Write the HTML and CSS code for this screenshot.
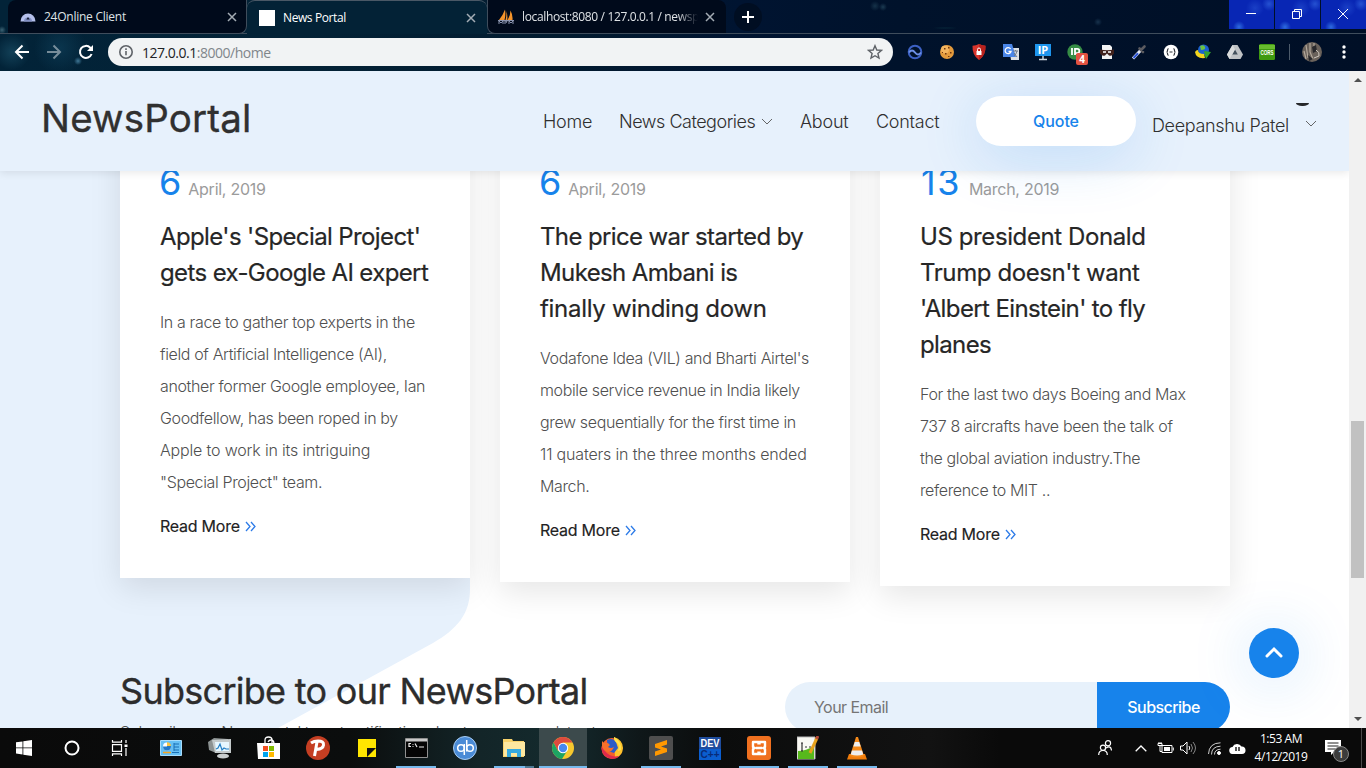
FILE: index.html
```html
<!DOCTYPE html>
<html lang="en">
<head>
<meta charset="utf-8">
<title>News Portal</title>
<link rel="stylesheet" href="styles.css">
</head>
<body>
<div class="browser">
  <div class="tabstrip">
    <div class="tab first">
      <svg width="16" height="16" viewBox="0 0 16 16"><path d="M.5 12.500a7.500 8 0 0 1 15 0z" fill="#b4c0ec"/><path d="M4 12.500a4 4 0 0 1 8 0z" fill="#8290c4"/><path d="M8 8l1.700 2.500H6.300z" fill="#10182f"/></svg>
      <span class="tabname n1">24Online Client</span>
      <svg class="x" width="10" height="10" viewBox="0 0 10 10"><path d="M1 1l8 8M9 1L1 9"/></svg>
    </div>
    <div class="tab active">
      <i class="blank"></i>
      <span class="tabname n2">News Portal</span>
      <svg class="x" width="10" height="10" viewBox="0 0 10 10"><path d="M1 1l8 8M9 1L1 9"/></svg>
    </div>
    <div class="tab third">
      <svg width="16" height="16" viewBox="0 0 16 16"><path d="M7 0.500Q8 6 6.500 11H1Q5 6 7 0.500zM8 2q2 4 1.200 9H7.500Q9 6 8 2zM12.500 1.500Q15 6 14.500 11H9.500Q12.500 6 12.500 1.500z" fill="#f5942b"/><path d="M0 11.500h16M1 15v-3l2 2 2-2v3M7 15v-3h2l-1 2M11 15v-3l2 2 2-2v3" stroke="#8993ae" fill="none"/></svg>
      <span class="tabname n3">localhost:8080 / 127.0.0.1 / newsp</span>
      <svg class="x" width="10" height="10" viewBox="0 0 10 10"><path d="M1 1l8 8M9 1L1 9"/></svg>
    </div>
    <div class="newtab"><svg width="12" height="12" viewBox="0 0 12 12"><path d="M6 0v12M0 6h12" stroke="#fff" stroke-width="2"/></svg></div>
    <div class="winbtns">
      <div><svg width="10" height="10"><path d="M0 4.500h10"/></svg></div>
      <div><svg width="10" height="10"><path d="M.5 2.500h7v7h-7zM2.500 2.500v-2h7v7h-2"/></svg></div>
      <div><svg width="10" height="10"><path d="M0 0l10 10M10 0L0 10"/></svg></div>
    </div>
  </div>
  <div class="toolbar">
    <svg class="nav" width="16" height="16" viewBox="0 0 16 16"><path d="M15 8H2M8.500 1.500L2 8l6.500 6.500" /></svg>
    <svg class="nav dim" width="16" height="16" viewBox="0 0 16 16"><path d="M1 8h13M7.500 1.500L14 8l-6.500 6.500"/></svg>
    <svg class="nav" width="16" height="16" viewBox="0 0 16 16"><path d="M13.600 10A6 6 0 1 1 12.300 3.700L14 5.500"/><path d="M15 1v6H9z" fill="#fff" stroke="none"/></svg>
    <div class="omnibox">
      <svg width="16" height="16" viewBox="0 0 16 16" fill="none" stroke="#5f6368" stroke-width="1.600"><circle cx="8" cy="8" r="6.200"/><path d="M8 7v4.300M8 4.300v1.600"/></svg>
      <span class="url"><b>127.0.0.1</b>:8000/home</span>
      <svg class="star" width="16" height="16" viewBox="0 0 16 16"><path d="M8 1.700l1.800 4.300 4.700.4-3.600 3.100 1.100 4.600L8 11.700l-4 2.400 1.100-4.600L1.500 6.400l4.700-.4z" fill="none" stroke="#5f6368" stroke-width="1.400"/></svg>
    </div>
    <div class="exts">
      <svg viewBox="0 0 16 16"><circle cx="8" cy="8" r="6.300" fill="none" stroke="#3c61c4" stroke-width="2"/><path d="M2 8.500q3-4 6 0t6 0" fill="none" stroke="#6d90e6" stroke-width="2"/></svg>
      <svg viewBox="0 0 16 16"><circle cx="8" cy="8" r="7" fill="#e39a3c"/><circle cx="6" cy="5.500" r="4" fill="#f3b45e"/><path d="M5 4h1.500v1.500H5zM9 3h1.500v1.500H9zM11 8h1.500v1.500H11zM6 9h1.500v1.500H6zM3 8h1v1H3zM9 12h1.500v1H9z" fill="#71370f"/></svg>
      <svg viewBox="0 0 16 16"><path d="M8 0q3 1.600 6.500 1.700Q15 11 8 16 1 11 1.500 1.700 5 1.600 8 0z" fill="#d8342c"/><path d="M8 0q3 1.600 6.500 1.700Q15 11 8 16z" fill="#b9221d"/><path d="M5.500 7h5v4h-5z" fill="#fff"/><path d="M6.500 7V5.500a1.500 1.500 0 0 1 3 0V7" fill="none" stroke="#fff"/></svg>
      <svg viewBox="0 0 16 16"><path d="M6 4h10v12H8z" fill="#dbdfe4"/><path d="M0 0h9l4 13H0z" fill="#4a86e8"/><path d="M7.600 5A3 3 0 1 0 8 7.500H5.500" fill="none" stroke="#fff" stroke-width="1.300"/><path d="M10 7h5M12.500 6v1M14 7q-1 4-3 5M11 9l3 4" fill="none" stroke="#6f7b8a"/></svg>
      <svg viewBox="0 0 16 16"><path d="M0 0h16v12H0z" fill="#1e95ee"/><path d="M4 15.500h8M8 12v3" stroke="#c9d4dc" stroke-width="1.500"/><text x="8" y="10" class="iptext">IP</text></svg>
      <div class="pub"><svg viewBox="0 0 16 16"><circle cx="8" cy="8" r="7.700" fill="#358c45"/><path d="M5 4v7M8 11V4.800h2.200a2 2 0 0 1 0 4.300H8" fill="none" stroke="#fff" stroke-width="1.800"/></svg><em>4</em></div>
      <svg viewBox="0 0 16 16"><path d="M3 1h8l2 2v12H3z" fill="#f3f3f3"/><path d="M1 5.500q7 1.500 14 0v4q-2 3-5 2l-2-2-2 2q-3 1-5-2z" fill="#40211c"/><path d="M4 8h3M9 8h3" stroke="#fff" stroke-width="1.300"/></svg>
      <svg viewBox="0 0 16 16"><path d="M2 14.500L10 6" stroke="#e4e9f5" stroke-width="3"/><path d="M2.500 14L7 9.200" stroke="#2c55d6" stroke-width="2"/><path d="M8.500 4.500l3.500 3.500M10 6l3.500-3.500" stroke="#5b5b60" stroke-width="2.600" stroke-linecap="round"/></svg>
      <svg viewBox="0 0 16 16"><circle cx="8" cy="8" r="7.300" fill="#fff"/><path d="M5.500 4.500Q4.500 5 4.500 6.500T3.500 8q1 0 1 1.500t1 2M10.500 4.500q1 .5 1 2t1 1.500q-1 0-1 1.500t-1 2M6.500 8h3" fill="none" stroke="#30343a" stroke-width="1.200"/></svg>
      <svg viewBox="0 0 16 16"><circle cx="8.500" cy="6" r="5.500" fill="#1b62cf"/><path d="M5 2q4-2 5 1T6 6z" fill="#6cc341"/><path d="M0 8q1-2 3-2 0 4 6 4l1 4q-9 1-10-6z" fill="#f2d51d"/><path d="M9 7l7 1-5 7-1-3z" fill="#33a52e"/></svg>
      <svg viewBox="0 0 16 16"><path d="M5.500 1h5L16 10.500 13.500 15h-11L0 10.500z" fill="#bfc2c5"/><path d="M8 5.500l2.800 5H5.200z" fill="#43505c"/><path d="M5.500 1L8 5.500 2.500 15 0 10.500z" fill="#d9dbdc"/></svg>
      <svg viewBox="0 0 16 16"><rect width="16" height="16" rx="1.500" fill="#3f9a10"/><path d="M0 1h16v4H0z" fill="#67bb2e"/><text x="8" y="10.600" class="cors" textLength="13" lengthAdjust="spacingAndGlyphs">CORS</text></svg>
    </div>
    <i class="vbar"></i>
    <svg class="avatar" viewBox="0 0 20 20"><circle cx="10" cy="10" r="10" fill="#6a625b"/><path d="M4 3l2 13M8 1v9l3 7M2 9l2 8M12 1v3" stroke="#b3a89b" stroke-width="1.200" fill="none"/><path d="M10 5l4-2 1 6-4 2zM6 13l5 4-4 2z" fill="#29292c"/><path d="M14 8q4 2 3 6l-5 2" stroke="#cfc8bf" fill="none"/></svg>
    <svg class="more" width="4" height="14"><circle cx="2" cy="2" r="1.700"/><circle cx="2" cy="7" r="1.700"/><circle cx="2" cy="12" r="1.700"/></svg>
  </div>
</div>

<div class="view">
  <div class="page">
    <svg class="shape" width="480" height="657" viewBox="0 0 480 657"><path d="M0 0H470V518C470 543 457 558 433 572L278 657H0Z" fill="#e7f1fc"/></svg>
    <header class="header">
      <span class="brand">NewsPortal</span>
      <nav class="menu">
        <a class="m1">Home</a>
        <a class="m2">News Categories</a>
        <svg class="chev" width="12" height="7" viewBox="0 0 12 7"><path d="M1 1l5 5 5-5"/></svg>
        <a class="m3">About</a>
        <a class="m4">Contact</a>
      </nav>
      <a class="quote">Quote</a>
      <div class="user"><a>Deepanshu Patel</a><svg class="chev" width="12" height="7" viewBox="0 0 12 7"><path d="M1 1l5 5 5-5"/></svg>
        <i class="pic"></i>
      </div>
    </header>
    <main class="cards">
      <article class="card">
        <div class="date"><b>6</b><span>April, 2019</span></div>
        <h3>Apple's 'Special Project'<br>gets ex-Google AI expert</h3>
        <p>In a race to gather top experts in the<br>field of Artificial Intelligence (AI),<br>another former Google employee, Ian<br>Goodfellow, has been roped in by<br><span class="loose">Apple to work in its intriguing</span><br>"Special Project" team.</p>
        <a class="more-link"><span>Read More</span><svg width="11" height="11" viewBox="0 0 11 11"><path d="M1 1l4 4.500L1 10M6 1l4 4.500L6 10"/></svg></a>
      </article>
      <article class="card">
        <div class="date"><b>6</b><span>April, 2019</span></div>
        <h3>The price war started by<br>Mukesh Ambani is<br><span class="loose">finally winding down</span></h3>
        <p>Vodafone Idea (VIL) and Bharti Airtel's<br>mobile service revenue in India likely<br>grew sequentially for the first time in<br><span class="loose">11 quaters in the three months ended</span><br>March.</p>
        <a class="more-link"><span>Read More</span><svg width="11" height="11" viewBox="0 0 11 11"><path d="M1 1l4 4.500L1 10M6 1l4 4.500L6 10"/></svg></a>
      </article>
      <article class="card">
        <div class="date"><b class="wide-day">13</b><span>March, 2019</span></div>
        <h3><span class="loose">US president Donald</span><br><span class="loose">Trump doesn't want</span><br>'Albert Einstein' to fly<br>planes</h3>
        <p>For the last two days Boeing and Max<br>737 8 aircrafts have been the talk of<br>the global aviation industry.The<br>reference to MIT ..</p>
        <a class="more-link"><span>Read More</span><svg width="11" height="11" viewBox="0 0 11 11"><path d="M1 1l4 4.500L1 10M6 1l4 4.500L6 10"/></svg></a>
      </article>
    </main>
    <section class="subscribe">
      <div class="pitch">
        <h2>Subscribe to our NewsPortal</h2>
        <p>Subscribe our Newsportal to get notification about our new updates to</p>
      </div>
      <div class="form"><span class="field">Your Email</span><span class="btn">Subscribe</span></div>
    </section>
    <div class="totop"><svg width="18" height="12" viewBox="0 0 18 12"><path d="M2 10l7-7 7 7" fill="none" stroke="#fff" stroke-width="3" stroke-linecap="round"/></svg></div>
  </div>
  <div class="scroll"><i class="up"></i><i class="thumb"></i><i class="down"></i></div>
</div>

<div class="taskbar">
  <div class="cell"><svg width="16" height="16" viewBox="0 0 16 16"><path d="M0 2.300l6.500-.9v6.100H0zM7.300 1.200L16 0v7.500H7.300zM0 8.300h6.500v6.200L0 13.600zM7.300 8.300H16V16l-8.700-1.300z" fill="#fff"/></svg></div>
  <div class="cell"><svg width="16" height="16"><circle cx="8" cy="8" r="6.500" fill="none" stroke="#fff" stroke-width="2"/></svg></div>
  <div class="cell wide"><svg width="18" height="16" viewBox="0 0 18 16" fill="none" stroke="#fff" stroke-width="1.200"><path d="M1.500 4.600h9v6.800h-9zM1.500 0v2.200h9V0M1.500 16v-2.200h9V16M15 0v3M15 8v8"/><path d="M13.500 4.500h3v2.500h-3z" fill="#fff" stroke="none"/></svg></div>
  <div class="cell"><svg width="22" height="16" viewBox="0 0 22 16"><path d="M.5.500h21v15H.5z" fill="#65bff4" stroke="#a8dcfb"/><circle cx="7" cy="6.500" r="4" fill="#fff"/><path d="M7 6.500V2.500a4 4 0 1 1-4 4z" fill="#2379c9"/><path d="M7 6V2.200A4 4 0 0 1 11 6z" fill="#f6c545"/><path d="M14 3v8M14 4h5M14 7h5M14 10h5M12 12.500h7" stroke="#1a6fb4"/><path d="M3 12.500h8" stroke="#f6a623" stroke-width="1.500"/></svg></div>
  <div class="cell"><svg width="24" height="22" viewBox="0 0 24 22"><path d="M0 5l6-4 14 1v12l-12 2-7-3z" fill="#8c9292"/><path d="M4 3l19-1v14H7z" fill="#c4cacb"/><path d="M7 5h14v9H8z" fill="#e7f7ff"/><path d="M8 12l2-1 2-4 2 6 2-2 2 1h3" fill="none" stroke="#237ec4" stroke-width="1.200"/><ellipse cx="15" cy="19" rx="6" ry="2.500" fill="#c9cdce"/></svg></div>
  <div class="cell"><svg width="24" height="24" viewBox="0 0 24 24"><path d="M0 7h23v16H1z" fill="#fff"/><path d="M8 8V4q0-3 3.500-3T15 4v4M11 6q1-2 3-2 3 0 3 4" fill="none" stroke="#fff" stroke-width="1.300"/><path d="M6 10h5v5H6z" fill="#f25022"/><path d="M12 10h5v5h-5z" fill="#7fba00"/><path d="M6 16h5v5H6z" fill="#00a4ef"/><path d="M12 16h5v5h-5z" fill="#ffb900"/></svg></div>
  <div class="cell"><svg width="24" height="24" viewBox="0 0 24 24"><circle cx="12" cy="12" r="12" fill="#c43e22"/><path d="M8.500 20L11 6M5 7Q8 5 12 5q6 0 5.500 4t-7 4.500" fill="none" stroke="#fff" stroke-width="3"/></svg></div>
  <div class="cell"><svg width="18" height="18" viewBox="0 0 18 18"><path d="M0 0h18v18H0z" fill="#ffe600"/><path d="M9 18V9h9z" fill="#111"/></svg></div>
  <div class="cell run"><svg width="23" height="20" viewBox="0 0 23 20"><path d="M.5.500h22v19H.5z" fill="#050505" stroke="#909090"/><path d="M1 1h21v2.500H1z" fill="#c9c9c9"/><path d="M6 5.500H4v3h2M8 6v.8M8 8v.8M10 5.500l2 3.500M14 9h5" stroke="#eee" fill="none" stroke-width="1.200"/></svg></div>
  <div class="cell"><svg width="24" height="24" viewBox="0 0 24 24"><circle cx="12" cy="12" r="11.500" fill="#4a8bd6" stroke="#a9cdf2"/><circle cx="8" cy="12" r="3.300" fill="none" stroke="#fff" stroke-width="1.500"/><path d="M11.300 8v11M13.700 4v11.500" stroke="#fff" stroke-width="1.500"/><circle cx="17" cy="12" r="3.300" fill="none" stroke="#fff" stroke-width="1.500"/></svg></div>
  <div class="cell run folder"><svg width="22" height="20" viewBox="0 0 22 20"><path d="M0 1h9l1 2h11v16H0z" fill="#f8d26b"/><path d="M1 4h21v14H1z" fill="#fde7a0"/><path d="M4 19v-8h14v8h-4v-4H8v4z" fill="#36a9df"/></svg></div>
  <div class="cell current"><svg width="22" height="22" viewBox="0 0 22 22"><circle cx="11" cy="11" r="11" fill="#f7c82e"/><path d="M1.500 5.500A11 11 0 0 1 20.500 5.500H11L6 14z" fill="#dd4b3e"/><path d="M1.500 5.500A11 11 0 0 0 10 22l5-8H6z" fill="#1da463"/><circle cx="11" cy="11" r="5.200" fill="#fff"/><circle cx="11" cy="11" r="4.200" fill="#4688f1"/></svg></div>
  <div class="cell"><svg width="22" height="22" viewBox="0 0 22 22"><circle cx="11" cy="11.500" r="10.500" fill="#f5612a"/><path d="M13 0q9 3 9 11a11 11 0 0 1-8 10z" fill="#fdc32c"/><path d="M.5 9q-.5 11 10.500 13 5 0 7-3-9 2-14-5z" fill="#e02a4c"/><path d="M6 3q6-3 9 2l2 6-4 5-6-2z" fill="#2a5cc8"/><path d="M1 4l2 2q4-1 6 2l-2 2q3 2 6 0-2 5-6 5-5-1-6-6z" fill="#f7702b"/><path d="M13 0q0 4 3 6t1 8l3-1Q21 4 13 0z" fill="#ffe14d"/></svg></div>
  <div class="cell run"><svg width="24" height="24" viewBox="0 0 24 24"><rect width="24" height="24" rx="2" fill="#4e4e4e"/><path d="M6 8l12-4v4.500l-6 2 6 2V16L6 20v-4.500l6-2-6-2z" fill="#ff9800"/></svg></div>
  <div class="cell"><svg width="22" height="23" viewBox="0 0 22 23"><path d="M0 0h22v12H0z" fill="#1f4c9c"/><path d="M0 12h22v11H0z" fill="#0b5ed0"/><text x="11" y="10" class="dev" textLength="19" lengthAdjust="spacingAndGlyphs">DEV</text><text x="11" y="21" class="cpp" textLength="19" lengthAdjust="spacingAndGlyphs">C++</text></svg></div>
  <div class="cell run"><svg width="24" height="24" viewBox="0 0 24 24"><rect width="24" height="24" rx="3" fill="#f0701f"/><path d="M11.500 8.500V6H6v5l2 1-2 1v5h5.500v-2.500M12.500 8.500V6H18v5l-2 1 2 1v5h-5.500v-2.500M9 12h6" fill="none" stroke="#fff" stroke-width="2.400" stroke-linejoin="round"/></svg></div>
  <div class="cell run"><svg width="22" height="24" viewBox="0 0 22 24"><path d="M0 1h18v22H0z" fill="#f8f8f3" stroke="#b9b9b9"/><path d="M1 15q8 0 16-5v13H1z" fill="#57b81c"/><path d="M4 7h2M4 15h2M5 7v8M8 11h2M12 11h2" stroke="#333" stroke-width="1.200"/><path d="M20 2l-7 15" stroke="#e7a11b" stroke-width="3"/><path d="M21 0l-1.500 3" stroke="#b64b38" stroke-width="3"/></svg></div>
  <div class="cell run"><svg width="20" height="23" viewBox="0 0 20 23"><path d="M2 17h16l2 5.500H0z" fill="#f07c0a"/><path d="M9 0h2l6 19q-7 3-14 0z" fill="#f58a1a"/><path d="M7.800 5h4.400l1.500 4.500H6.300zM5 13.500h10l1.300 4q-6 2-12.600 0z" fill="#eee"/></svg></div>
  <div class="tray">
    <svg class="people" width="14" height="16" viewBox="0 0 14 16" fill="none" stroke="#fff" stroke-width="1.200"><circle cx="10" cy="3.200" r="2.600"/><path d="M8 8q5-3 5.500 2.500"/><circle cx="5" cy="7.700" r="2.600"/><path d="M.7 15q0-4.500 4.300-4.500T9.300 15"/></svg>
    <svg class="caret" width="12" height="7" viewBox="0 0 12 7"><path d="M.7 6.300L6 1l5.300 5.300" fill="none" stroke="#fff" stroke-width="1.300"/></svg>
    <svg class="batt" width="17" height="13" viewBox="0 0 17 13"><path d="M5 3.500h10v7H5zM1 1.500v2h4v-2zM3 3.500v6h2M2 0v1.500M4 0v1.500M16.300 5.500v3" fill="none" stroke="#fff"/><path d="M7 5h6v4H7z" fill="#fff"/></svg>
    <svg class="vol" width="17" height="14" viewBox="0 0 17 14" fill="none" stroke="#fff"><path d="M.5 5h2.500l4-4v12l-4-4H.5z"/><path d="M9 5q1.500 2 0 4"/><path d="M11 3q3 4 0 8M13 1q5 6 0 12" opacity=".5"/></svg>
    <svg class="wifi" width="13" height="13" viewBox="0 0 13 13" fill="none" stroke="#fff"><path d="M.5 12Q1 1 12.500.800M3.500 12.500q0-8 9-8.300M6.500 12.500q0-5 6-5.300" opacity=".8"/><circle cx="11" cy="11" r="1.500" fill="#fff"/></svg>
    <svg class="cloud" width="17" height="11" viewBox="0 0 17 11"><path d="M4 11a3.500 3.500 0 0 1-.5-7A5 5 0 0 1 12.500 3.500 3.700 3.700 0 0 1 13 11z" fill="#fff"/><path d="M7 4v4M10 4v4" stroke="#111" stroke-width="1.400"/></svg>
    <div class="clock"><span>1:53 AM</span><span>4/12/2019</span></div>
    <div class="note"><svg width="16" height="16" viewBox="0 0 16 16"><path d="M0 0h16v12H9l-3 3v-3H0z" fill="#fff"/><path d="M2.500 3h11M2.500 6h11M2.500 9h8" stroke="#222"/></svg><em>1</em></div>
    <i class="peek"></i>
  </div>
</div>
</body>
</html>
```
FILE: styles.css
```css
* { box-sizing: border-box; }
body { margin: 0; width: 1366px; height: 768px; overflow: hidden; display: flex; flex-direction: column; font-family: Inter, "Liberation Sans", sans-serif; color: #2c2c2c; }
svg { display: block; flex: none; }
em { font-style: normal; }
h2, h3, p { margin: 0; }

.browser { flex: none; height: 71px; font-family: "Open Sans", "Noto Sans", sans-serif; background:
  radial-gradient(circle at 2px 30px, #3b6374 0, transparent 4px),
  radial-gradient(circle at 78px 61px, #3f7796 0, transparent 4px),
  radial-gradient(circle at 12px 52px, #124057 0, transparent 18px),
  radial-gradient(circle at 60px 48px, #0a354d 0, transparent 26px),
  radial-gradient(circle at 875px 6px, #153249 0, transparent 5px),
  radial-gradient(circle at 883px 7px, #1c3b52 0, transparent 4px),
  radial-gradient(ellipse at 945px 28px, #0b3443 0, transparent 16px),
  radial-gradient(circle at 1098px 22px, #17324d 0, transparent 4px),
  linear-gradient(90deg, #022338 0, #032236 300px, #021b2f 560px, #001431 740px, #00122b 900px, #000f26 1366px); }
.tabstrip { display: flex; height: 34px; border-bottom: 1px solid #3f4d5c; }
.tab { display: flex; align-items: center; height: 34px; color: #dfe3e6; font-size: 12px; white-space: nowrap; }
.tab.first { margin-left: 8px; width: 239px; padding: 0 9px 0 12px; background: #000a1b; border-radius: 8px 0 8px 0; border-bottom: 1px solid #3f4d5c; border-right: 1px solid #3f4d5c; }
.tab.active { width: 240px; padding: 0 11px 0 12px; background: #032236; border-top: 1px solid #4a5866; border-radius: 8px 8px 0 0; }
.tab.third { width: 239px; padding: 0 11px 0 10px; background: #000a1b; border-left: 1px solid #3f4d5c; border-bottom: 1px solid #3f4d5c; border-radius: 0 8px 0 8px; }
.blank { width: 16px; height: 16px; background: #fff; }
.tabname { flex: 1; margin-left: 8px; }
.n1 { letter-spacing: -.25px; }
.n2 { letter-spacing: -.4px; color: #fff; }
.n3 { flex: none; width: 176px; margin-right: 8px; letter-spacing: -.36px; -webkit-mask-image: linear-gradient(90deg, #000 155px, transparent 176px); }
.x { fill: none; stroke: #a4adb5; stroke-width: 1.500; }
.third .x { margin-left: -1px; }
.newtab { display: grid; place-items: center; width: 28px; height: 28px; margin: 3px 0 0 8px; border-radius: 50%; background: #000e22; }
.winbtns { display: flex; margin-left: auto; gap: 1px; }
.winbtns div { display: grid; place-items: center; width: 45px; height: 29px; background: radial-gradient(circle at 10px 27px, #2e6be0 0, transparent 6px), radial-gradient(circle at 40px 4px, #2551d2 0, transparent 7px), radial-gradient(circle at 26px 8px, #1a3fc6 0, transparent 9px), #0826b4; }
.winbtns svg { fill: none; stroke: #fff; margin-right: 1px; margin-top: -1px; }

.toolbar { display: flex; align-items: center; height: 36px; padding-left: 14px; }
.nav { margin-right: 16px; fill: none; stroke: #fff; stroke-width: 2; }
.dim { opacity: .45; }
.omnibox { display: flex; align-items: center; width: 785px; height: 28px; margin-left: -2px; padding: 0 10px; border-radius: 14px; background: #f1f3f4; }
.url { margin-left: 8px; font-size: 14px; letter-spacing: -.48px; color: #80868b; }
.url b { font-weight: 400; color: #202124; }
.star { margin-left: auto; }
.exts { display: flex; gap: 16px; margin-left: 14px; }
.exts svg { width: 16px; height: 16px; overflow: visible; }
.pub { position: relative; }
.pub em { position: absolute; left: 9px; top: 2px; margin-top: 7px; width: 12px; height: 12px; border-radius: 2px; background: #e25241; color: #fff; font: 700 10px/12px "Open Sans", sans-serif; text-align: center; }
.iptext { font: 700 11px "Open Sans", sans-serif; fill: #fff; text-anchor: middle; }
.cors { font: 700 6.500px "Liberation Sans", sans-serif; fill: #fff; text-anchor: middle; }
.vbar { width: 1px; height: 16px; margin-left: 14px; background: #4d5b6b; }
.avatar { width: 20px; height: 20px; margin-left: 12px; }
.more { margin-left: 20px; fill: #fff; }

.view { flex: none; display: flex; height: 657px; }
.page { position: relative; width: 1349px; height: 657px; overflow: hidden; background: #fff; }
.shape { position: absolute; left: 0; top: 0; }
.header { position: absolute; z-index: 2; left: 0; top: 0; width: 1349px; height: 100px; display: flex; align-items: center; padding-left: 42px; background: #e7f1fc; box-shadow: 0 2px 8px rgba(0,0,0,.09); }
.brand { width: 501px; font-size: 38.500px; font-weight: 400; letter-spacing: .15px; margin-left: -1px; margin-right: 1px; color: #303030; -webkit-text-stroke: .35px #303030; padding-bottom: 6px; white-space: nowrap; }
.menu { display: flex; align-items: center; font-size: 18px; font-weight: 300; letter-spacing: -.25px; width: 433px; color: #2f2f2f; white-space: nowrap; }
.m1 { width: 76px; }
.m2 { width: 142px; letter-spacing: -.48px; }
.m3 { margin-left: 27px; width: 76px; }
.chev { fill: none; stroke: #555; stroke-width: .9; }
.quote { width: 160px; height: 50px; border-radius: 25px; background: #fff; color: #1783eb; font-size: 16px; font-weight: 500; letter-spacing: -.1px; line-height: 50px; text-align: center; box-shadow: 0 10px 60px rgba(23,131,235,.2); }
.user { position: relative; display: flex; align-items: center; margin: 9px 0 0 16px; font-size: 18px; font-weight: 300; letter-spacing: -.33px; color: #2f2f2f; white-space: nowrap; }
.user a { width: 153px; }
.user .chev { margin-top: -4px; }
.pic { position: absolute; left: 144px; top: -12px; width: 13px; height: 3px; background: #26282a; border-radius: 0 0 6px 6px / 0 0 3px 3px; }

.cards { position: relative; display: flex; align-items: flex-start; gap: 30px; padding-left: 120px; height: 604px; }
.card { width: 350px; padding: 89px 0 0 40px; background: #fff; box-shadow: 0 10px 30px rgba(0,0,0,.1); white-space: nowrap; }
.date { display: flex; align-items: baseline; height: 46px; margin: -1px 0 14px; line-height: 46px; gap: 8px; font-size: 16px; letter-spacing: -.27px; color: #9b9b9b; }
.date b { font-size: 36px; font-weight: 400; letter-spacing: 0; margin-left: -1px; margin-right: -1px; color: #1783eb; }
.date .wide-day { letter-spacing: 1.500px; margin: 0; padding-left: 1px; }
.card h3 { font-size: 24px; line-height: 36px; font-weight: 400; letter-spacing: -.62px; color: #262626; -webkit-text-stroke: .2px #262626; }
.card h3 .loose { letter-spacing: -.3px; }
.card h3 .loose:not(:last-child) { letter-spacing: -.4px; }
.card p { margin-top: 15px; font-size: 16px; line-height: 32px; font-weight: 300; letter-spacing: -.36px; color: #505050; }
.card p .loose { letter-spacing: -.17px; }
.more-link { display: flex; align-items: center; gap: 5px; height: 24px; margin: 16px 0 40px; font-size: 16px; font-weight: 400; letter-spacing: -.25px; color: #222; -webkit-text-stroke: .15px #222; }
.more-link svg { fill: none; stroke: #2c7be8; stroke-width: 1.300; }

.subscribe { position: relative; display: flex; justify-content: space-between; padding: 0 119px 0 120px; white-space: nowrap; }
.pitch h2 { margin-top: -9px; font-size: 36px; line-height: 50px; font-weight: 400; letter-spacing: -.72px; color: #2c2c2c; -webkit-text-stroke: .35px #2c2c2c; }
.pitch p { margin-top: 0; font-size: 16px; line-height: 32px; font-weight: 300; letter-spacing: -.53px; color: #505050; }
.form { display: flex; width: 445px; height: 50px; margin-top: 7px; border-radius: 25px; overflow: hidden; font-size: 16px; line-height: 51px; letter-spacing: -.55px; }
.field { width: 312px; padding-left: 29px; background: #e7f1fb; color: #757575; }
.btn { flex: 1; background: #1783eb; color: #fff; font-weight: 500; text-align: center; }
.totop { position: absolute; right: 50px; top: 557px; display: grid; place-items: center; width: 50px; height: 50px; padding-bottom: 2px; border-radius: 50%; background: #1783eb; box-shadow: 0 4px 60px rgba(23,131,235,.22); }
.scroll { width: 17px; height: 657px; padding: 7px 2px; background: #f1f1f1; display: flex; flex-direction: column; align-items: center; }
.thumb { width: 13px; height: 157px; margin-top: 339px; background: #c1c1c1; }
.up { border: 4px solid transparent; border-top: 0; border-bottom-color: #505050; }
.down { margin-top: auto; border: 4px solid transparent; border-bottom: 0; border-top-color: #505050; }

.taskbar { flex: none; display: flex; height: 40px; background: linear-gradient(90deg, #0a0a0a 0, #0b0d0d 350px, #132528 480px, #142a2d 560px, #0f1719 640px, #0b0c0c 720px, #121212 930px, #0a0a0a 1000px); color: #fff; }
.cell { display: grid; place-items: center; width: 48px; height: 40px; margin-right: 1px; }
.cell:nth-child(-n+2) { margin-right: 0; }
.cell.wide { margin-right: 3px; }
.run { background: linear-gradient(#76b9ed, #76b9ed) 4px 38px / 40px 2px no-repeat; }
.folder { background: linear-gradient(90deg, #76b9ed 31px, #4d7892 31px) 4px 38px / 40px 2px no-repeat; }
.current { background: linear-gradient(#76b9ed, #76b9ed) 0 38px / 48px 2px no-repeat, #3c4a4c; }
.dev { font: 700 10px "Liberation Sans", sans-serif; fill: #fff; text-anchor: middle; }
.cpp { font: 700 10px "Liberation Sans", sans-serif; fill: #082b78; text-anchor: middle; }
.tray { display: flex; align-items: center; margin-left: auto; }
.caret { margin-left: 23px; }
.batt { margin-left: 10px; }
.vol { margin-left: 6px; }
.wifi { margin-left: 11px; }
.cloud { margin-left: 8px; }
.clock { display: flex; flex-direction: column; width: 60px; margin-left: 5px; font: 12px/18px "Open Sans", sans-serif; letter-spacing: -.45px; text-align: center; }
.note { position: relative; margin-left: 14px; width: 25px; }
.note em { position: absolute; left: 8px; top: 6px; width: 16px; height: 16px; border-radius: 50%; background: #3c3c3c; border: 1px solid #888; font: 11px/14px "Open Sans", sans-serif; text-align: center; }
.peek { width: 1px; height: 40px; margin: 0 4px 0 11px; background: #4a4a4a; }
```
